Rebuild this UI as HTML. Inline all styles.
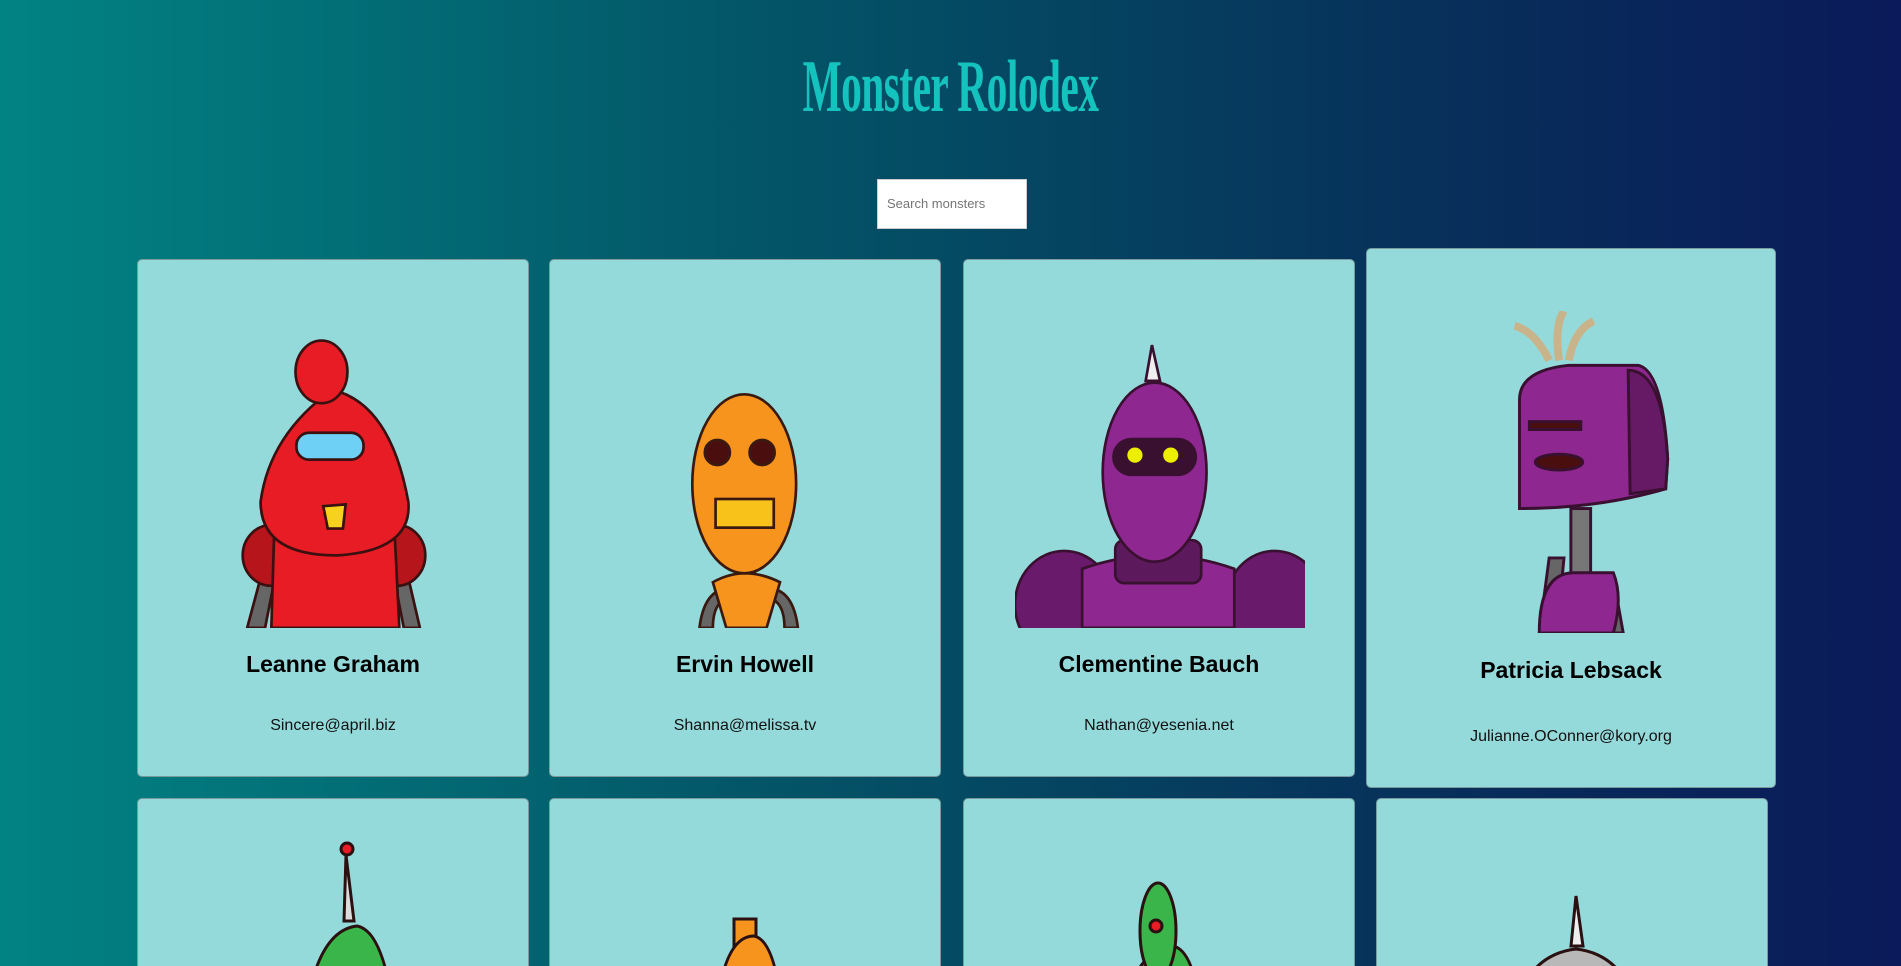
<!DOCTYPE html>
<html><head><meta charset="utf-8"><style>
*{margin:0;padding:0;box-sizing:border-box}
html,body{width:1901px;height:966px;overflow:hidden}
body{background:linear-gradient(to right,#028383 0%,#035567 40%,#07305a 75%,#0b1a5a 100%);font-family:"Liberation Sans",sans-serif;position:relative}
h1{position:absolute;left:0;width:1901px;top:50px;text-align:center;color:#14c3bd;font-family:"Liberation Serif",serif;font-size:74px;font-weight:bold;letter-spacing:-1px;transform:scaleX(0.56);line-height:74px}
.search{position:absolute;left:877px;top:179px;width:150px;height:50px;background:#fff;border:1px solid #ccc}
.search span{position:absolute;left:9px;top:16px;font-size:13px;color:#757575}
.card{position:absolute;width:392px;height:518px;background:#95dadb;border:1px solid #7a9a9e;border-radius:5px;overflow:hidden}
.card svg{position:absolute;left:51px;top:76px}
.name{position:absolute;left:0;right:0;top:391px;text-align:center;font-size:23px;font-weight:bold;color:#000;font-family:"Liberation Sans",sans-serif}
.email{position:absolute;left:0;right:0;top:457px;text-align:center;font-size:16px;color:#111;font-family:"Liberation Sans",sans-serif}
.short{height:168px;border-bottom:none;border-radius:5px 5px 0 0}
</style></head><body>
<h1>Monster Rolodex</h1>
<div class="search"><span>Search monsters</span></div>

<div class="card" style="left:137px;top:259px">
<svg width="290" height="292" viewBox="0 0 324 326">
<g stroke="#3a1010" stroke-width="3">
<path d="M65 326 L80 270 L95 275 L85 326Z M258 326 L245 270 L230 275 L240 326Z" fill="#666"/>
<ellipse cx="92" cy="245" rx="32" ry="34" fill="#b5151b"/><ellipse cx="232" cy="245" rx="32" ry="34" fill="#b5151b"/>
<path d="M92 326 L95 225 Q160 205 230 225 L235 326Z" fill="#e81c24"/>
<path d="M160 60 Q225 75 245 185 Q250 240 165 245 Q80 245 80 185 Q90 110 160 60Z" fill="#e81c24"/>
<ellipse cx="148" cy="40" rx="29" ry="35" fill="#e81c24"/>
<rect x="120" y="108" width="75" height="30" rx="14" fill="#6fd0f5"/>
<path d="M150 190 L175 188 L172 215 L155 215Z" fill="#f7d21c"/>
</g></svg>
<div class="name">Leanne Graham</div><div class="email">Sincere@april.biz</div></div>

<div class="card" style="left:549px;top:259px">
<svg width="290" height="292" viewBox="0 0 324 326">
<g stroke="#3a1a10" stroke-width="3">
<path d="M110 326 Q115 285 140 282 L145 292 Q125 295 125 326Z M220 326 Q215 285 190 282 L185 292 Q205 295 205 326Z" fill="#666"/>
<rect x="152" y="230" width="20" height="35" fill="#666"/>
<path d="M125 275 Q160 255 200 275 L185 326 L140 326Z" fill="#f7941d"/>
<ellipse cx="160" cy="165" rx="58" ry="100" fill="#f7941d"/>
<circle cx="130" cy="130" r="14" fill="#4a0e0e"/><circle cx="180" cy="130" r="14" fill="#4a0e0e"/>
<rect x="128" y="182" width="65" height="32" fill="#f9c21b"/>
</g></svg>
<div class="name">Ervin Howell</div><div class="email">Shanna@melissa.tv</div></div>

<div class="card" style="left:963px;top:259px">
<svg width="290" height="292" viewBox="0 0 324 326">
<g stroke="#3a1030" stroke-width="3">
<ellipse cx="55" cy="300" rx="55" ry="60" fill="#6a1a6a"/><ellipse cx="290" cy="300" rx="55" ry="60" fill="#6a1a6a"/>
<path d="M75 326 L75 260 Q160 230 245 260 L245 326Z" fill="#8e2890"/>
<rect x="112" y="228" width="96" height="48" rx="10" fill="#5c1a5c"/>
<path d="M153 10 L162 50 L146 50Z" fill="#eee"/>
<ellipse cx="156" cy="152" rx="58" ry="100" fill="#8e2890"/>
<rect x="110" y="115" width="92" height="40" rx="20" fill="#3a1030"/>
<circle cx="134" cy="133" r="10" fill="#ee0"/><circle cx="174" cy="133" r="10" fill="#ee0"/>
</g></svg>
<div class="name">Clementine Bauch</div><div class="email">Nathan@yesenia.net</div></div>

<div class="card" style="left:1366px;top:248px;width:410px;height:540px">
<svg width="320" height="322" viewBox="0 0 324 326" style="left:34px;top:62px">
<g stroke="#3a1030" stroke-width="3">
<path d="M140 326 L150 250 L165 250 L158 326Z M225 326 L215 270 L200 270 L210 326Z" fill="#666"/>
<rect x="172" y="200" width="20" height="70" fill="#777"/>
<path d="M140 326 Q140 265 175 265 L215 265 Q225 290 215 326Z" fill="#8e2890"/>
<path d="M120 90 Q120 60 170 55 L240 55 Q265 60 270 150 L268 180 Q200 200 120 200Z" fill="#8e2890"/>
<path d="M230 60 Q265 60 270 150 L268 180 L232 185Z" fill="#661a66"/>
<rect x="130" y="112" width="52" height="8" fill="#4a0e0e"/>
<ellipse cx="160" cy="153" rx="24" ry="8" fill="#4a0e0e"/>
<path d="M150 50 Q135 20 115 15 M160 50 Q155 15 165 0 M170 50 Q175 20 195 10" fill="none" stroke="#c9b38a" stroke-width="8"/>
</g></svg>
<div class="name" style="top:408px">Patricia Lebsack</div><div class="email" style="top:479px">Julianne.OConner@kory.org</div></div>

<div class="card short" style="left:137px;top:798px">
<svg width="324" height="200" viewBox="0 0 324 200" style="left:34px;top:42px">
<g stroke="#2a1010" stroke-width="3">
<circle cx="175" cy="8" r="6" fill="#e81c24"/>
<path d="M174 14 L182 80 L172 80Z" fill="#ddd"/>
<path d="M130 200 Q140 90 185 85 Q215 90 225 200Z" fill="#39b54a"/>
</g></svg></div>
<div class="card short" style="left:549px;top:798px">
<svg width="324" height="200" viewBox="0 0 324 200" style="left:34px;top:42px">
<g stroke="#2a1010" stroke-width="3">
<rect x="150" y="78" width="22" height="30" fill="#f7941d"/>
<path d="M130 200 Q135 95 170 95 Q195 100 200 200Z" fill="#f7941d"/>
</g></svg></div>
<div class="card short" style="left:963px;top:798px">
<svg width="324" height="200" viewBox="0 0 324 200" style="left:34px;top:42px">
<g stroke="#2a1010" stroke-width="3">
<path d="M120 200 Q130 110 175 105 Q200 110 205 200Z" fill="#39b54a"/>
<ellipse cx="160" cy="90" rx="18" ry="48" fill="#39b54a"/>
<circle cx="158" cy="85" r="6" fill="#e81c24"/>
</g></svg></div>
<div class="card short" style="left:1376px;top:798px">
<svg width="324" height="200" viewBox="0 0 324 200" style="left:34px;top:42px">
<g stroke="#2a1010" stroke-width="3">
<path d="M165 55 L172 105 L160 105Z" fill="#eee"/>
<path d="M100 200 Q105 115 165 108 Q225 115 230 200Z" fill="#b8b8b8"/>
</g></svg></div>
</body></html>
